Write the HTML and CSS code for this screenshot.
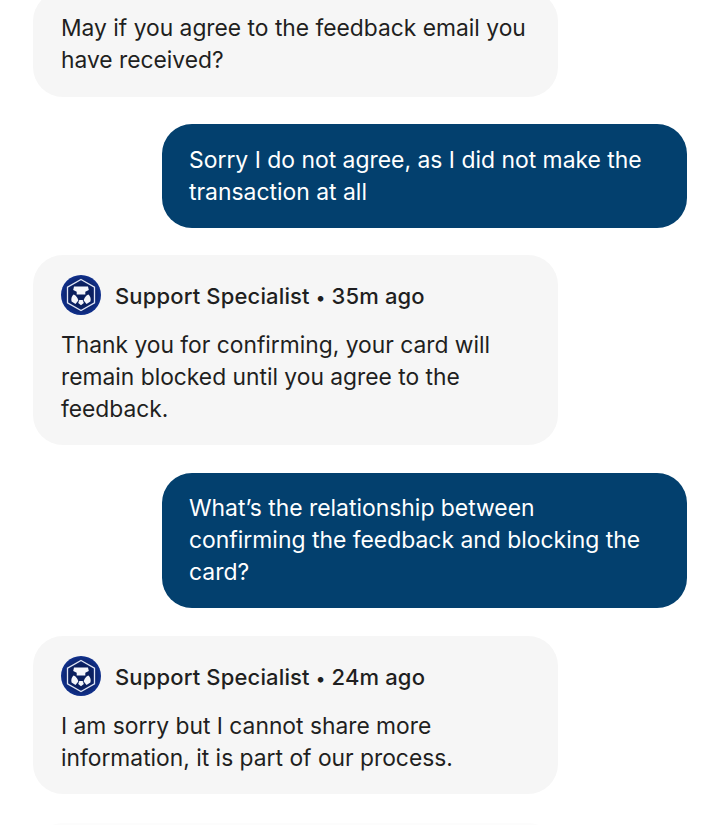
FILE: index.html
```html
<!DOCTYPE html>
<html lang="en">
  <head>
    <meta charset="UTF-8" />
    <meta name="viewport" content="width=device-width, initial-scale=1.0" />
    <title>Support Chat</title>
    <link rel="stylesheet" href="styles.css">
  </head>
  <body>
    <svg class="icon-defs" width="0" height="0" aria-hidden="true">
      <defs>
        <radialGradient id="logo-fill">
          <stop offset="0.55" stop-color="#0a1f5e" />
          <stop offset="1" stop-color="#10308c" />
        </radialGradient>
      </defs>
      <symbol id="agent-logo" viewBox="0 0 40 40">
        <circle cx="20" cy="20" r="20" fill="url(#logo-fill)" />
        <path d="M20 4.5 33.5 12.2V27.8L20 35.5 6.5 27.8V12.2Z" fill="none" stroke="#dfe5f4" stroke-width="1.3" />
        <path d="M13 11.5H27L27.8 15 24.3 16.8V19.5H15.7V16.8L12.2 15Z" fill="#f4f6fb" />
        <path d="M12.5 19.5C14.5 19.8 16.8 23 17.3 25.5L14.5 29 10.6 26.5C9.8 24 10.6 21 12.5 19.5Z" fill="#f4f6fb" />
        <path d="M27.5 19.5C25.5 19.8 23.2 23 22.7 25.5L25.5 29 29.4 26.5C30.2 24 29.4 21 27.5 19.5Z" fill="#f4f6fb" />
        <path d="M18.3 25H21.7L22.8 28 20 30.2 17.2 28Z" fill="#f4f6fb" />
      </symbol>
    </svg>

    <div class="chat-messages">
      <div class="message incoming">
        <p>May if you agree to the feedback email you have received?</p>
      </div>

      <div class="message outgoing">
        <p>Sorry I do not agree, as I did not make the transaction at all</p>
      </div>

      <div class="message incoming agent">
        <div class="message-header">
          <svg class="agent-logo"><use href="#agent-logo" /></svg>
          <span>Support Specialist <span class="dot">•</span> 35m ago</span>
        </div>
        <p>Thank you for confirming, your card will remain blocked until you agree to the feedback.</p>
      </div>

      <div class="message outgoing">
        <p>What’s the relationship between confirming the feedback and blocking the card?</p>
      </div>

      <div class="message incoming agent">
        <div class="message-header">
          <svg class="agent-logo"><use href="#agent-logo" /></svg>
          <span>Support Specialist <span class="dot">•</span> 24m ago</span>
        </div>
        <p>I am sorry but I cannot share more information, it is part of our process.</p>
      </div>

      <div class="message incoming next"></div>
    </div>
  </body>
</html>
```

FILE: styles.css
```css
body,
p {
  margin: 0;
  padding: 0;
}

body {
  height: 825px;
  overflow: hidden;
  font-family: Inter, "Liberation Sans", sans-serif;
  background-color: #ffffff;
}

.icon-defs {
  position: absolute;
}

/* first bubble is cut off by the top of the screen */
.chat-messages {
  display: flex;
  flex-direction: column;
  gap: 27.5px;
  height: 834.5px;
  margin-top: -9.5px;
  padding: 0 33px;
  overflow: hidden;
}

.message {
  flex-shrink: 0;
  box-sizing: border-box;
  width: 525px;
  padding: 21px 28px;
  border-radius: 30px;
  font-size: 22.8px;
  line-height: 32px;
}

.incoming {
  background-color: #f6f6f6;
  color: #1f1f21;
}

.agent {
  padding-bottom: 20px;
}

.outgoing {
  align-self: flex-end;
  padding: 19.5px 40px 20px 27px;
  background-color: #03406e;
  color: #ffffff;
  font-size: 22.9px;
}

.message-header {
  display: flex;
  align-items: center;
  gap: 14px;
  margin-bottom: 13px;
  font-size: 22px;
  font-weight: 500;
  letter-spacing: 0.15px;
  line-height: 40px;
}

.dot {
  font-size: 18px;
  line-height: 1;
}

.agent-logo {
  width: 40px;
  height: 40px;
  margin-top: -2px;
}

.next {
  height: 60px;
  margin-top: 2px;
  background-color: #fcfcfc;
}
```
